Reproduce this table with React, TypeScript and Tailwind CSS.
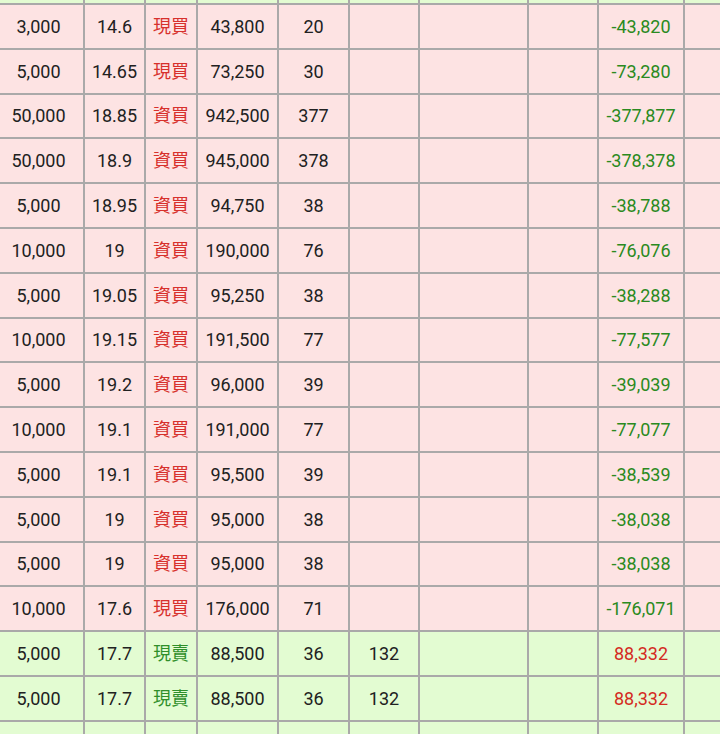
type Row = {
  qty: string;
  price: string;
  kind: string;
  amount: string;
  fee: string;
  tax: string;
  net: string;
  sell: boolean;
};

const rows: Row[] = [
  { qty: "3,000", price: "14.6", kind: "現買", amount: "43,800", fee: "20", tax: "", net: "-43,820", sell: false },
  { qty: "5,000", price: "14.65", kind: "現買", amount: "73,250", fee: "30", tax: "", net: "-73,280", sell: false },
  { qty: "50,000", price: "18.85", kind: "資買", amount: "942,500", fee: "377", tax: "", net: "-377,877", sell: false },
  { qty: "50,000", price: "18.9", kind: "資買", amount: "945,000", fee: "378", tax: "", net: "-378,378", sell: false },
  { qty: "5,000", price: "18.95", kind: "資買", amount: "94,750", fee: "38", tax: "", net: "-38,788", sell: false },
  { qty: "10,000", price: "19", kind: "資買", amount: "190,000", fee: "76", tax: "", net: "-76,076", sell: false },
  { qty: "5,000", price: "19.05", kind: "資買", amount: "95,250", fee: "38", tax: "", net: "-38,288", sell: false },
  { qty: "10,000", price: "19.15", kind: "資買", amount: "191,500", fee: "77", tax: "", net: "-77,577", sell: false },
  { qty: "5,000", price: "19.2", kind: "資買", amount: "96,000", fee: "39", tax: "", net: "-39,039", sell: false },
  { qty: "10,000", price: "19.1", kind: "資買", amount: "191,000", fee: "77", tax: "", net: "-77,077", sell: false },
  { qty: "5,000", price: "19.1", kind: "資買", amount: "95,500", fee: "39", tax: "", net: "-38,539", sell: false },
  { qty: "5,000", price: "19", kind: "資買", amount: "95,000", fee: "38", tax: "", net: "-38,038", sell: false },
  { qty: "5,000", price: "19", kind: "資買", amount: "95,000", fee: "38", tax: "", net: "-38,038", sell: false },
  { qty: "10,000", price: "17.6", kind: "現買", amount: "176,000", fee: "71", tax: "", net: "-176,071", sell: false },
  { qty: "5,000", price: "17.7", kind: "現賣", amount: "88,500", fee: "36", tax: "132", net: "88,332", sell: true },
  { qty: "5,000", price: "17.7", kind: "現賣", amount: "88,500", fee: "36", tax: "132", net: "88,332", sell: true },
  // next row, scrolled mostly out of view
  { qty: "", price: "", kind: "", amount: "", fee: "", tax: "", net: "", sell: true },
];

const cell = "flex items-center justify-center border-r-2 border-[#aaa9a9] shrink-0";

function TradeRow({ r }: { r: Row }) {
  const bg = r.sell ? "bg-[#e3fcd2]" : "bg-[#fde3e3]";
  const kindColor = r.sell ? "text-[#2f8f2a]" : "text-[#d7302c]";
  const netColor = r.sell ? "text-[#d42b1f]" : "text-[#2a8a20]";
  return (
    <div className={`flex h-[44.8px] border-b-2 border-[#aaa9a9] ${bg}`}>
      <div className={`${cell} w-[85px] pr-[6px]`}>{r.qty}</div>
      <div className={`${cell} w-[61px]`}>{r.price}</div>
      <div className={`${cell} w-[52px] ${kindColor}`}>{r.kind}</div>
      <div className={`${cell} w-[81px]`}>{r.amount}</div>
      <div className={`${cell} w-[71px]`}>{r.fee}</div>
      <div className={`${cell} w-[70px]`}>{r.tax}</div>
      <div className={`${cell} w-[109px]`}></div>
      <div className={`${cell} w-[70px]`}></div>
      <div className={`${cell} w-[86px] ${netColor}`}>{r.net}</div>
      <div className="flex-1"></div>
    </div>
  );
}

export default function App() {
  return (
    <div
      className="w-[720px] h-[734px] overflow-hidden bg-white text-[18px] text-[#212121]"
      style={{ fontFamily: 'Roboto, "Noto Sans CJK TC", sans-serif' }}
    >
      {/* tail of the previous row */}
      <div className="flex h-[3px] bg-[#e3fcd2]">
        <div className="w-[85px] shrink-0 border-r-2 border-[#aaa9a9]"></div>
        <div className="w-[61px] shrink-0 border-r-2 border-[#aaa9a9]"></div>
        <div className="w-[52px] shrink-0 border-r-2 border-[#aaa9a9]"></div>
        <div className="w-[81px] shrink-0 border-r-2 border-[#aaa9a9]"></div>
        <div className="w-[71px] shrink-0 border-r-2 border-[#aaa9a9]"></div>
        <div className="w-[70px] shrink-0 border-r-2 border-[#aaa9a9]"></div>
        <div className="w-[109px] shrink-0 border-r-2 border-[#aaa9a9]"></div>
        <div className="w-[70px] shrink-0 border-r-2 border-[#aaa9a9]"></div>
        <div className="w-[86px] shrink-0 border-r-2 border-[#aaa9a9]"></div>
      </div>
      <div className="border-t-2 border-[#aaa9a9]">
        {rows.map((r, i) => (
          <TradeRow key={i} r={r} />
        ))}
      </div>
    </div>
  );
}
